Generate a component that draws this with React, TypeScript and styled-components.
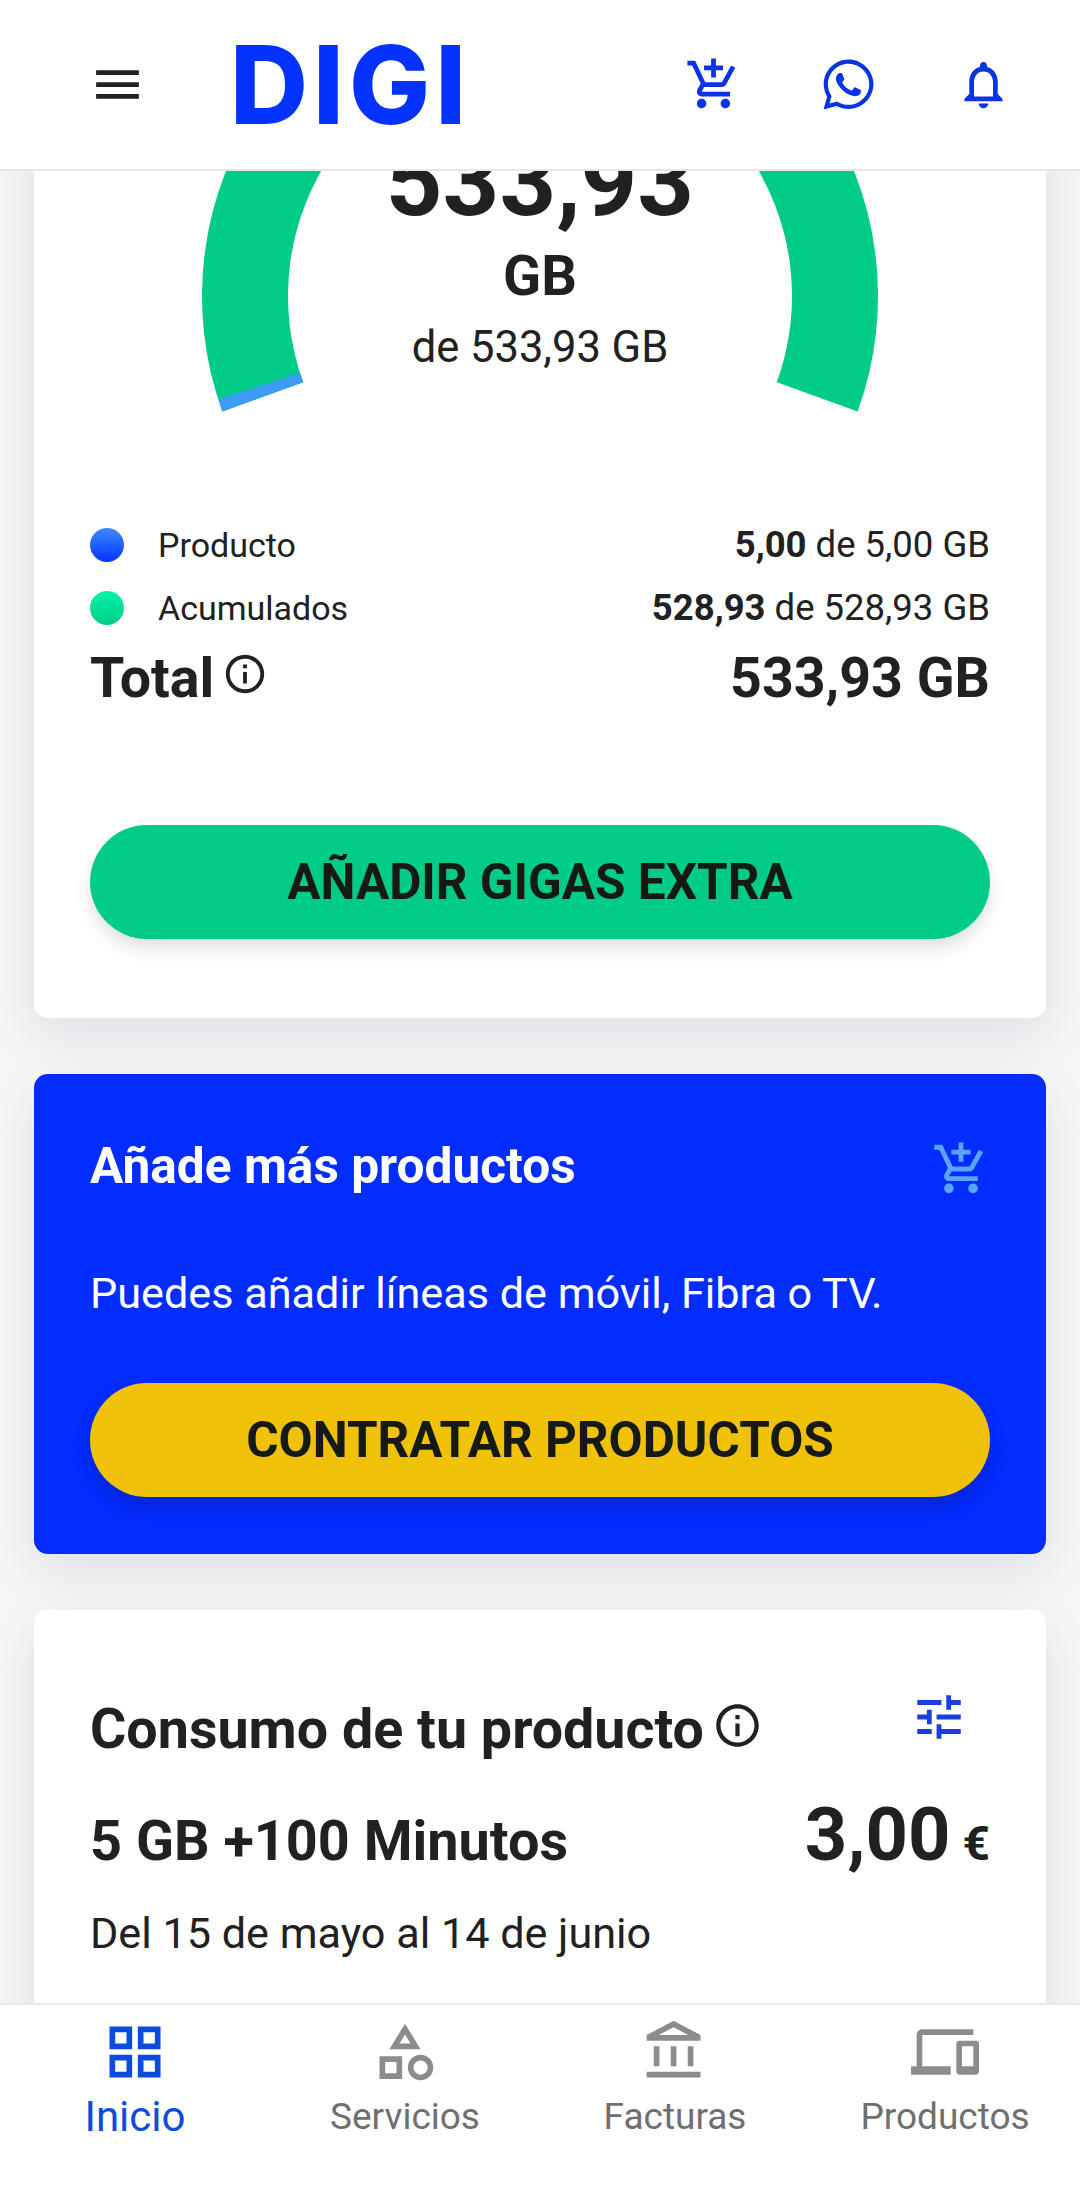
import { FaWhatsapp } from "react-icons/fa";
import {
  MdMenu,
  MdOutlineAccountBalance,
  MdOutlineAddShoppingCart,
  MdOutlineCategory,
  MdOutlineDevices,
  MdOutlineGridView,
  MdOutlineInfo,
  MdOutlineNotifications,
  MdOutlineTune,
} from "react-icons/md";
import styled, { createGlobalStyle } from "styled-components";

const GlobalStyle = createGlobalStyle`
  html, body {
    margin: 0;
    padding: 0;
    background: #f6f6f8;
  }
  * {
    box-sizing: border-box;
  }
`;

const Page = styled.div`
  width: 1080px;
  height: 2185px;
  display: flex;
  flex-direction: column;
  overflow: hidden;
  font-family: Roboto, "Liberation Sans", sans-serif;
  color: #212121;
`;

const Header = styled.header`
  height: 171px;
  flex: none;
  display: flex;
  align-items: center;
  padding: 0 68px 0 89px;
  background: #fff;
  border-bottom: 2px solid #e6e6e8;
  position: relative;
  z-index: 2;
`;

const MenuButton = styled.div`
  display: flex;
  color: #212121;
  font-size: 57px;
  margin-right: 84px;
`;

const Logo = styled.div`
  font-family: Inter, sans-serif;
  font-weight: 800;
  font-size: 108px;
  line-height: 1;
  letter-spacing: 5px;
  color: #0433ff;
`;

const HeaderActions = styled.div`
  margin-left: auto;
  display: flex;
  align-items: center;
  gap: 78px;
  color: #0a33e6;
`;

const HeaderIcon = styled.div`
  display: flex;
  font-size: 57px;
`;

const Main = styled.main`
  flex: 1;
  min-height: 0;
  overflow: hidden;
  display: flex;
  flex-direction: column;
  gap: 56px;
  padding: 0 34px;
`;

const Card = styled.section`
  flex: none;
  background: #fff;
  border-radius: 14px;
  box-shadow: 0 20px 50px rgba(40, 40, 70, 0.1);
`;

const GaugeCard = styled(Card)`
  margin-top: -100px;
  padding: 0 56px 79px;
`;

const GaugeStack = styled.div`
  display: grid;
  height: 442px;

  & > * {
    grid-area: 1 / 1;
  }
`;

const GaugeText = styled.div`
  display: flex;
  flex-direction: column;
  align-items: center;
  padding-top: 60px;
`;

const GaugeValue = styled.div`
  font-size: 99px;
  line-height: 100px;
  font-weight: 700;
`;

const GaugeUnit = styled.div`
  font-size: 56px;
  line-height: 64px;
  font-weight: 700;
  margin-top: 13px;
`;

const GaugeTotal = styled.div`
  font-size: 43.5px;
  line-height: 48px;
  margin-top: 16px;
`;

const LegendRow = styled.div`
  display: flex;
  align-items: center;
  height: 63px;
  font-size: 34px;
`;

const Dot = styled.span<{ $from: string; $to: string }>`
  width: 34px;
  height: 34px;
  border-radius: 50%;
  margin-right: 34px;
  background: linear-gradient(${(p) => p.$from}, ${(p) => p.$to});
`;

const RowValue = styled.span`
  margin-left: auto;
`;

const LegendValue = styled(RowValue)`
  font-size: 36.5px;

  b {
    font-weight: 700;
  }
`;

const TotalRow = styled.div`
  display: flex;
  align-items: center;
  height: 78px;
  font-size: 55.5px;
  font-weight: 700;
`;

const InfoIcon = styled.span<{ $size: number }>`
  display: inline-flex;
  font-size: ${(p) => p.$size}px;
  color: #212121;
  margin-left: 8px;
  transform: translateY(-4px);
`;

const PillButton = styled.button<{ $bg: string; $shadow: string }>`
  display: block;
  width: 100%;
  height: 114px;
  border: 0;
  border-radius: 57px;
  background: ${(p) => p.$bg};
  box-shadow: 0 10px 16px ${(p) => p.$shadow};
  color: #161a14;
  font-family: inherit;
  font-size: 49.5px;
  font-weight: 700;
`;

const GaugeButton = styled(PillButton)`
  margin-top: 108px;
`;

const PromoCard = styled(Card)`
  background: #032cff;
  color: #fff;
  padding: 56px;
  height: 480px;
`;

const PromoHead = styled.div`
  display: flex;
  justify-content: space-between;
  align-items: center;
  height: 72px;
`;

const PromoTitle = styled.h2`
  margin: 0;
  font-size: 49.6px;
  font-weight: 700;
`;

const PromoIcon = styled.div`
  display: flex;
  color: #57a5ff;
  font-size: 58px;
  margin-top: 6px;
`;

const PromoText = styled.p`
  margin: 67px 0 64px;
  font-size: 43.2px;
  line-height: 50px;
`;

const ConsumeCard = styled(Card)`
  padding: 79px 56px 80px;
`;

const ConsumeHead = styled.div`
  display: flex;
  align-items: center;
  justify-content: space-between;
  height: 80px;
`;

const ConsumeTitle = styled.h2`
  margin: 0;
  display: flex;
  align-items: center;
  font-size: 55.6px;
  font-weight: 700;
`;

const TuneIcon = styled.div`
  display: flex;
  color: #1a3fe0;
  font-size: 58px;
  margin: -24px 22px 0 0;
`;

const PlanRow = styled.div`
  display: flex;
  align-items: baseline;
  justify-content: space-between;
  margin-top: 22px;
`;

const PlanName = styled.div`
  font-size: 55.8px;
  font-weight: 700;
`;

const Price = styled.div`
  font-size: 74px;
  font-weight: 700;

  small {
    font-size: 48px;
    margin-left: 12px;
  }
`;

const Period = styled.div`
  margin-top: 30px;
  font-size: 43.2px;
`;

const BottomNav = styled.nav`
  height: 182px;
  flex: none;
  display: grid;
  grid-template-columns: repeat(4, 1fr);
  background: #fff;
  border-top: 2px solid #e9e9ec;
  position: relative;
  z-index: 2;
`;

const NavItem = styled.div<{ $active?: boolean }>`
  display: flex;
  flex-direction: column;
  align-items: center;
  padding-top: 13px;
  color: ${(p) => (p.$active ? "#0a4ddd" : "#6f6f71")};
  font-size: ${(p) => (p.$active ? 42 : 37)}px;
  line-height: 48px;
`;

const NavIcon = styled.div<{ $active?: boolean }>`
  display: flex;
  font-size: 68px;
  margin-bottom: 7px;
  color: ${(p) => (p.$active ? "#0a4ddd" : "#8c8c8e")};
`;

// angles measured from the gauge centre, clockwise from the positive x axis
const polar = (cx: number, cy: number, r: number, deg: number) => {
  const a = (deg * Math.PI) / 180;
  return `${cx + r * Math.cos(a)} ${cy + r * Math.sin(a)}`;
};

const band = (from: number, to: number) => {
  const large = to - from > 180 ? 1 : 0;
  return `M${polar(450, 225, 338, from)} A338 338 0 ${large} 1 ${polar(450, 225, 338, to)} L${polar(450, 225, 252, to)} A252 252 0 ${large} 0 ${polar(450, 225, 252, from)} Z`;
};

const GaugeArc = () => (
  <svg width="900" height="430" viewBox="0 0 900 430">
    <path d={band(160, 380)} fill="#00cc88" />
    <path d={band(160, 162.2)} fill="#3d9bf5" />
  </svg>
);

const navItems = [
  { label: "Inicio", icon: <MdOutlineGridView />, active: true },
  { label: "Servicios", icon: <MdOutlineCategory /> },
  { label: "Facturas", icon: <MdOutlineAccountBalance /> },
  { label: "Productos", icon: <MdOutlineDevices /> },
];

const App = () => {
  return (
    <Page>
      <GlobalStyle />
      <Header>
        <MenuButton>
          <MdMenu />
        </MenuButton>
        <Logo>DIGI</Logo>
        <HeaderActions>
          <HeaderIcon>
            <MdOutlineAddShoppingCart />
          </HeaderIcon>
          <HeaderIcon>
            <FaWhatsapp />
          </HeaderIcon>
          <HeaderIcon>
            <MdOutlineNotifications />
          </HeaderIcon>
        </HeaderActions>
      </Header>

      <Main>
        <GaugeCard>
          <GaugeStack>
            <GaugeArc />
            <GaugeText>
              <GaugeValue>533,93</GaugeValue>
              <GaugeUnit>GB</GaugeUnit>
              <GaugeTotal>de 533,93 GB</GaugeTotal>
            </GaugeText>
          </GaugeStack>
          <LegendRow>
            <Dot $from="#3d8bff" $to="#0433ff" />
            Producto
            <LegendValue>
              <b>5,00</b> de 5,00 GB
            </LegendValue>
          </LegendRow>
          <LegendRow>
            <Dot $from="#00f5a8" $to="#00cc88" />
            Acumulados
            <LegendValue>
              <b>528,93</b> de 528,93 GB
            </LegendValue>
          </LegendRow>
          <TotalRow>
            Total
            <InfoIcon $size={46}>
              <MdOutlineInfo />
            </InfoIcon>
            <RowValue>533,93 GB</RowValue>
          </TotalRow>
          <GaugeButton $bg="#00cc88" $shadow="rgba(40, 60, 60, 0.14)">
            AÑADIR GIGAS EXTRA
          </GaugeButton>
        </GaugeCard>

        <PromoCard>
          <PromoHead>
            <PromoTitle>Añade más productos</PromoTitle>
            <PromoIcon>
              <MdOutlineAddShoppingCart />
            </PromoIcon>
          </PromoHead>
          <PromoText>Puedes añadir líneas de móvil, Fibra o TV.</PromoText>
          <PillButton $bg="#f0c207" $shadow="rgba(0, 20, 120, 0.3)">
            CONTRATAR PRODUCTOS
          </PillButton>
        </PromoCard>

        <ConsumeCard>
          <ConsumeHead>
            <ConsumeTitle>
              Consumo de tu producto
              <InfoIcon $size={51}>
                <MdOutlineInfo />
              </InfoIcon>
            </ConsumeTitle>
            <TuneIcon>
              <MdOutlineTune />
            </TuneIcon>
          </ConsumeHead>
          <PlanRow>
            <PlanName>5 GB +100 Minutos</PlanName>
            <Price>
              3,00<small>€</small>
            </Price>
          </PlanRow>
          <Period>Del 15 de mayo al 14 de junio</Period>
        </ConsumeCard>
      </Main>

      <BottomNav>
        {navItems.map((item) => (
          <NavItem key={item.label} $active={item.active}>
            <NavIcon $active={item.active}>{item.icon}</NavIcon>
            {item.label}
          </NavItem>
        ))}
      </BottomNav>
    </Page>
  );
};

export default App;
